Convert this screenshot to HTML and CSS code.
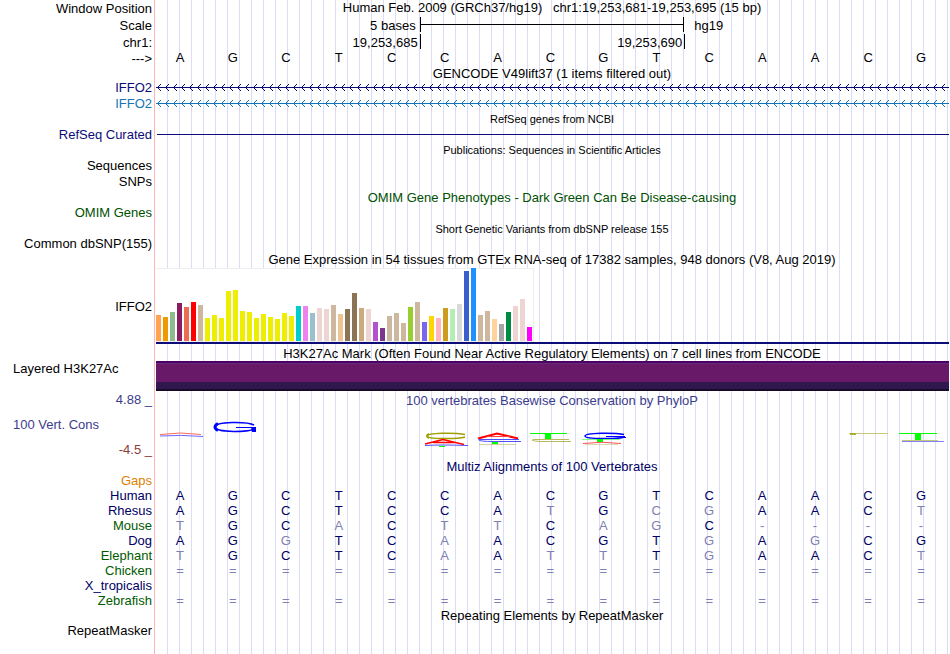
FILE: index.html
```
<!DOCTYPE html>
<html lang="en">
    <head>
        <meta charset="UTF-8">
        <title>Human chr1:19,253,681-19,253,695 Genome Browser</title>
        <link rel="stylesheet" href="styles.css">
    </head>
    <body>
        <main class="browser">
            <div class="row tall">
                <div class="label">Window Position</div>
                <h1 class="title">Human Feb. 2009 (GRCh37/hg19) &nbsp; chr1:19,253,681-19,253,695 (15 bp)</h1>
            </div>
            <div class="row tall">
                <div class="label">Scale</div>
                <div class="thirds">
                    <span class="scale-size">5 bases</span>
                    <span class="scale-bar"></span>
                    <span class="scale-db">hg19</span>
                </div>
            </div>
            <div class="row tall">
                <div class="label">chr1:</div>
                <div class="thirds ruler">
                    <span>19,253,685</span>
                    <span>19,253,690</span>
                    <span></span>
                </div>
            </div>
            <div class="row bases-row">
                <div class="label">---&gt;</div>
                <div class="bases" id="bases"></div>
            </div>

            <h2 class="title gencode">GENCODE V49lift37 (1 items filtered out)</h2>
            <div class="row gene">
                <div class="label navy">IFFO2</div>
                <svg class="strand" aria-hidden="true">
                    <defs>
                        <pattern id="arrows-navy" x="1" width="8" height="7" patternUnits="userSpaceOnUse">
                            <path d="M4 0 L0.5 3.5 L4 7" fill="none" stroke="#0c0c78"/>
                        </pattern>
                    </defs>
                    <rect width="100%" height="7" fill="url(#arrows-navy)"/>
                    <rect y="3" width="100%" height="1" fill="#0c0c78"/>
                </svg>
            </div>
            <div class="row gene">
                <div class="label blue">IFFO2</div>
                <svg class="strand" aria-hidden="true">
                    <defs>
                        <pattern id="arrows-blue" x="1" width="8" height="7" patternUnits="userSpaceOnUse">
                            <path d="M4 0 L0.5 3.5 L4 7" fill="none" stroke="#1474b8"/>
                        </pattern>
                    </defs>
                    <rect width="100%" height="7" fill="url(#arrows-blue)"/>
                    <rect y="3" width="100%" height="1" fill="#1474b8"/>
                </svg>
            </div>

            <h2 class="title small refseq-title">RefSeq genes from NCBI</h2>
            <div class="row refseq">
                <div class="label navy">RefSeq Curated</div>
                <div class="line"></div>
            </div>

            <h2 class="title small">Publications: Sequences in Scientific Articles</h2>
            <div class="row"><div class="label">Sequences</div></div>
            <div class="row"><div class="label">SNPs</div></div>

            <h2 class="title omim">OMIM Gene Phenotypes - Dark Green Can Be Disease-causing</h2>
            <div class="row short"><div class="label omim">OMIM Genes</div></div>

            <h2 class="title small">Short Genetic Variants from dbSNP release 155</h2>
            <div class="row short"><div class="label">Common dbSNP(155)</div></div>

            <h2 class="title">Gene Expression in 54 tissues from GTEx RNA-seq of 17382 samples, 948 donors (V8, Aug 2019)</h2>
            <div class="row gtex">
                <div class="label">IFFO2</div>
                <div class="gtex-track">
                    <div class="gtex-bars" id="gtex"></div>
                </div>
            </div>

            <h2 class="title h3k-title">H3K27Ac Mark (Often Found Near Active Regulatory Elements) on 7 cell lines from ENCODE</h2>
            <div class="row h3k-row">
                <div class="label left">Layered H3K27Ac</div>
                <div class="h3k"></div>
            </div>

            <div class="row cons">
                <div class="cons-labels">
                    <div class="label cons-blue">4.88 _</div>
                    <div class="label left cons-blue">100 Vert. Cons</div>
                    <div class="label cons-red">-4.5 _</div>
                </div>
                <div class="cons-track">
                    <h2 class="cons-blue">100 vertebrates Basewise Conservation by PhyloP</h2>
                    <svg class="logo" viewBox="155 411 794 48" preserveAspectRatio="none" aria-hidden="true">
                        <g fill="none">
                            <!-- 1 -->
                            <path d="M160 434.5 Q181 431.5 201 434.5" stroke="#ff6a5a"/>
                            <path d="M160 436 Q181 434.5 203 436.5" stroke="#6a6aff"/>
                            <!-- 2 -->
                            <path d="M254 425 C248 421.5 215 421 215 427 C215 433 252 432.5 254 428.5" stroke="#0000ff" stroke-width="1.5"/>
                            <path d="M218 423.5 Q212 427 218 430.5" stroke="#0000ff" stroke-width="3"/>
                            <path d="M236 427.5 H256" stroke="#0000ff"/>
                            <path d="M251 427 H256 V432 H252 Z" fill="#0000ff"/>
                            <!-- 6 -->
                            <path d="M465 434.5 C455 432.5 427 432.5 427 436 C427 439.5 458 439 465 437" stroke="#a0a000" stroke-width="1.5"/>
                            <path d="M429 434 Q425 436 429 438" stroke="#a0a000" stroke-width="2"/>
                            <path d="M425 444 L443 439.5 L464 444.5 M433 442.5 H456" stroke="#ff0000" stroke-width="1.5"/>
                            <path d="M425 445.5 Q440 444.5 468 445.5" stroke="#5050ff"/>
                            <path d="M439 446.5 H445" stroke="#00ff00"/>
                            <!-- 7 -->
                            <path d="M478 438.5 L497 433.5 L518 438.5" stroke="#ff0000" stroke-width="2"/>
                            <path d="M487 436.5 H510" stroke="#ff4040"/>
                            <path d="M519 439.5 H479 Q477 441.5 495 441.5 H521" stroke="#5050ff"/>
                            <path d="M492 442 H498 V444 H492 Z" fill="#00ff00"/>
                            <path d="M479 444.5 H516" stroke="#b8b860" stroke-opacity="0.6"/>
                            <!-- 8 -->
                            <path d="M530 433.5 H567" stroke="#00ff00"/>
                            <path d="M545 434 H551 V439 H545 Z" fill="#00ff00"/>
                            <path d="M569 439.5 H534 Q528 440.5 540 441.5 H571" stroke="#b8b860"/>
                            <!-- 9 -->
                            <path d="M624 434.5 C615 432.5 585 432.5 585 436 C585 439.5 620 439 624 437" stroke="#0000ff" stroke-width="1.5"/>
                            <path d="M606 436.5 H625 M620 437.5 H626" stroke="#0000ff"/>
                            <path d="M582 439.5 H620" stroke="#80ff80"/>
                            <path d="M597 439 H603 V442 H597 Z" fill="#00ff00"/>
                            <path d="M583 443.5 Q602 441 621 443.5" stroke="#ff5050"/>
                            <path d="M585 444.5 H618" stroke="#b8b860" stroke-opacity="0.5"/>
                            <!-- 14 -->
                            <path d="M849 433.5 H888" stroke="#c8c878"/>
                            <path d="M850 434 H856" stroke="#b0b030" stroke-width="2"/>
                            <!-- 15 -->
                            <path d="M899 433.5 H937" stroke="#00ff00"/>
                            <path d="M915 434 H921 V440 H915 Z" fill="#00ff00"/>
                            <path d="M902 440.5 H938" stroke="#c8c878"/>
                            <path d="M902 441.5 H944" stroke="#8080ff"/>
                        </g>
                    </svg>
                </div>
            </div>

            <h2 class="title multiz">Multiz Alignments of 100 Vertebrates</h2>
            <table class="align">
                <tbody id="align"></tbody>
            </table>

            <h2 class="title">Repeating Elements by RepeatMasker</h2>
            <div class="row short"><div class="label">RepeatMasker</div></div>
        </main>

        <script>
            const reference = "AGCTCCACGTCAACG";

            // lower case = base differs from human
            const species = [
                ["Gaps", "gaps", ""],
                ["Human", "near", "AGCTCCACGTCAACG"],
                ["Rhesus", "near", "AGCTCCAtGcgAACt"],
                ["Mouse", "far", "tGCaCttCagC----"],
                ["Dog", "near", "AGgTCaACGTgAgCG"],
                ["Elephant", "far", "tGCTCaAttTgAACt"],
                ["Chicken", "far", "==============="],
                ["X_tropicalis", "near", ""],
                ["Zebrafish", "far", "==============="]
            ];

            // [height, color] for each tissue
            const tissues = [
                [26, "#ffa54f"], [24, "#ee9a00"], [29, "#8fbc8f"], [38, "#8b1c62"], [34, "#ee6a50"], [39, "#ff0000"],
                [36, "#cdb79e"], [23, "#eeee00"], [26, "#eeee00"], [23, "#eeee00"], [50, "#eeee00"], [51, "#eeee00"],
                [30, "#eeee00"], [29, "#eeee00"], [23, "#eeee00"], [27, "#eeee00"], [24, "#eeee00"], [22, "#eeee00"],
                [28, "#eeee00"], [25, "#eeee00"], [35, "#00cdcd"], [35, "#ee82ee"], [28, "#9ac0cd"], [33, "#eed5d2"],
                [32, "#eed5d2"], [36, "#cdb79e"], [27, "#eec591"], [32, "#8b7355"], [48, "#8b7355"], [33, "#cdaa7d"],
                [32, "#eed5d2"], [19, "#b452cd"], [13, "#7a378b"], [25, "#cdb79e"], [28, "#cdb79e"], [18, "#cdb79e"],
                [34, "#9acd32"], [39, "#cdb79e"], [19, "#7a67ee"], [25, "#ffd700"], [23, "#ffb6c1"], [33, "#cd9b1d"],
                [32, "#b4eeb4"], [37, "#d9d9d9"], [70, "#3a5fcd"], [73, "#1e90ff"], [26, "#cdb79e"], [30, "#cdb79e"],
                [22, "#ffd39b"], [17, "#a6a6a6"], [29, "#008b45"], [35, "#eed5d2"], [42, "#eed5d2"], [14, "#ff00ff"]
            ];

            for (const base of reference) {
                const span = document.createElement("span");
                span.textContent = base;
                document.getElementById("bases").appendChild(span);
            }

            for (const [height, color] of tissues) {
                const bar = document.createElement("div");
                bar.className = "bar";
                bar.style.height = height + "px";
                bar.style.background = color;
                document.getElementById("gtex").appendChild(bar);
            }

            for (const [name, group, seq] of species) {
                const row = document.createElement("tr");
                const head = document.createElement("th");
                head.scope = "row";
                head.className = group;
                head.textContent = name;
                row.appendChild(head);
                for (const base of seq.padEnd(15)) {
                    const cell = document.createElement("td");
                    cell.textContent = base.toUpperCase();
                    if (!/[A-Z]/.test(base)) {
                        cell.className = "diff";
                    }
                    row.appendChild(cell);
                }
                document.getElementById("align").appendChild(row);
            }
        </script>
    </body>
</html>
```
FILE: styles.css
```
* {
    margin: 0;
    padding: 0;
    box-sizing: border-box;
}

body {
    background: white;
    color: black;
    font-family: "Liberation Sans", Arial, sans-serif;
    font-size: 13px;
    line-height: 15px;
}

/* pink divider after the labels, then a guide line every 12px */
.browser {
    min-height: 100vh;
    margin-right: 1px;
    background:
        linear-gradient(#ffb4b4, #ffb4b4) 154px 0 / 1px 100% no-repeat,
        repeating-linear-gradient(90deg, #dcdcf8 0, #dcdcf8 1px, transparent 1px, transparent 12px) 167px 0 no-repeat;
}

.row {
    display: grid;
    grid-template-columns: 152px 1fr;
    column-gap: 3px;
    height: 16px;
    line-height: 16px;
}

.row.tall {
    height: 17px;
    line-height: 17px;
}

.row.short {
    height: 15px;
    line-height: 14px;
}

.label {
    text-align: right;
    white-space: nowrap;
}

.label.left {
    text-align: left;
    padding-left: 13px;
}

h1, h2 {
    font-size: 13px;
    font-weight: normal;
    text-align: center;
    white-space: nowrap;
}

.title {
    height: 16px;
    line-height: 16px;
}

h2.title {
    margin-left: 155px;
}

.title.small {
    font-size: 11px;
}

.title.gencode {
    height: 14px;
    line-height: 18px;
}

.title.refseq-title {
    height: 17px;
    line-height: 17px;
}

.navy {
    color: #0c0c78;
}

.blue {
    color: #1474b8;
}

.omim {
    color: #005000;
}

.title.multiz {
    height: 14px;
    color: #000064;
}

.thirds {
    display: grid;
    grid-template-columns: repeat(3, 1fr);
}

.scale-size {
    text-align: right;
    padding-right: 4px;
}

.scale-bar {
    height: 15px;
    border-left: 1px solid black;
    border-right: 1px solid black;
    background: linear-gradient(black, black) 0 7px / 100% 1px no-repeat;
}

.scale-db {
    padding-left: 10px;
}

.ruler span {
    height: 15px;
    text-align: right;
    padding-right: 2px;
}

.ruler span + span {
    border-left: 1px solid black;
}

.row.bases-row {
    height: 14px;
    line-height: 15px;
}

.bases {
    display: grid;
    grid-template-columns: repeat(15, 1fr);
    line-height: 13px;
    text-align: center;
}

.bases span {
    padding-right: 3px;
}

.row.gene {
    line-height: 17px;
}

.strand {
    width: calc(100% - 1px);
    height: 7px;
    margin-left: 1px;
    align-self: center;
}

.row.refseq {
    height: 14px;
    line-height: 14px;
}

.line {
    height: 1px;
    margin: 6px 0 0 2px;
    background: #0c0c78;
}

.row.gtex {
    height: 76px;
    line-height: 78px;
}

.gtex-track {
    height: 76px;
    margin-left: 1px;
    border-bottom: 2px solid #0c0c78;
}

.gtex-bars {
    display: flex;
    align-items: flex-end;
    gap: 2px;
    width: 378px;
    height: 74px;
    background: white;
    border: solid #eeeeee;
    border-width: 1px 1px 1px 0;
}

.bar {
    width: 5px;
    flex: none;
}

.title.h3k-title {
    height: 17px;
    line-height: 20px;
}

.row.h3k-row {
    height: 30px;
}

.h3k {
    margin-left: 1px;
    background: linear-gradient(#4b0068 2px, #6b2a78 2px 3px, #681a68 3px 21px, #30184f 21px 28px, #180a28 28px);
}

.cons-blue {
    color: #3c3c8c;
}

.cons-red {
    color: #8c3c3c;
}

.row.cons {
    height: 68px;
}

.cons-labels {
    display: flex;
    flex-direction: column;
    gap: 9px;
    padding-top: 1px;
}

.cons-track h2 {
    height: 20px;
    line-height: 20px;
}

.logo {
    display: block;
    width: 100%;
    height: 48px;
}

.align {
    width: 100%;
    table-layout: fixed;
    border-collapse: collapse;
    color: #000064;
}

.align th {
    width: 155px;
    height: 15px;
    padding-right: 3px;
    font-weight: normal;
    text-align: right;
}

.align td {
    height: 15px;
    padding-right: 3px;
    text-align: center;
}

.align .diff {
    color: #8080b2;
}

.align .gaps {
    color: #e08000;
}

.align .near {
    color: #000064;
}

.align .far {
    color: #005a00;
}
```
